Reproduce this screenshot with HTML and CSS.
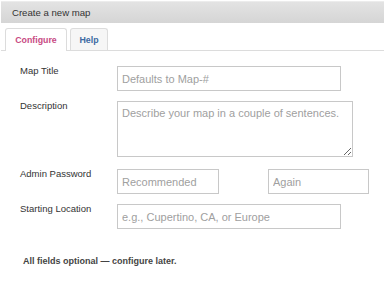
FILE: index.html
```html
<!DOCTYPE html>
<html lang="en">
<head>
    <meta charset="UTF-8">
    <meta name="viewport" content="width=device-width, initial-scale=1.0">
    <title>Create a new map</title>
    <link rel="stylesheet" href="styles.css">
</head>
<body>
    <div class="panel">
        <div class="panel-header">Create a new map</div>

        <div class="tabs">
            <div class="tab tab-config active">Configure</div>
            <div class="tab tab-help">Help</div>
        </div>

        <form class="map-form">
            <div class="row">
                <label for="mapTitle">Map Title</label>
                <input type="text" id="mapTitle" class="field wide" placeholder="Defaults to Map-#">
            </div>
            <div class="row row-desc">
                <label for="description">Description</label>
                <textarea id="description" class="field area" placeholder="Describe your map in a couple of sentences."></textarea>
            </div>
            <div class="row row-pass">
                <label for="password">Admin Password</label>
                <input type="password" id="password" class="field short" placeholder="Recommended">
                <input type="password" id="password2" class="field again" placeholder="Again">
            </div>
            <div class="row">
                <label for="location">Starting Location</label>
                <input type="text" id="location" class="field wide" placeholder="e.g., Cupertino, CA, or Europe">
            </div>
        </form>

        <p class="note">All fields optional — configure later.</p>
    </div>
</body>
</html>
```

FILE: styles.css
```css
/* page */
body {
    margin: 0;
    font-family: "Liberation Sans", Arial, sans-serif;
    background: #fff;
    color: #333;
}
.panel {
    padding: 1px 0 0 1px;
}
.panel-header {
    height: 22px;
    line-height: 22px;
    padding-left: 11px;
    font-size: 9.6px;
    color: #333;
    background: linear-gradient(#e3e3e3, #d5d5d5);
    border-top: 1px solid #ececec;
    box-sizing: border-box;
}

/* tabs */
.tabs {
    display: flex;
    gap: 3px;
    margin-top: 5px;
    padding-left: 4px;
    border-bottom: 1px solid #dcdcdc;
}
.tab {
    box-sizing: border-box;
    height: 22px;
    line-height: 22px;
    text-align: center;
    font-size: 8.8px;
    font-weight: bold;
    color: #3d6aa3;
    background: #f6f6f6;
    border: 1px solid #dcdcdc;
    border-bottom: none;
    border-radius: 3px 3px 0 0;
}
.tab-config {
    width: 62px;
}
.tab-help {
    width: 38px;
}
.tab.active {
    color: #c84a83;
    background: #fff;
    margin-bottom: -1px;
    height: 23px;
}

/* form */
.map-form {
    padding: 15px 0 0 19px;
}
.row {
    display: flex;
    align-items: flex-start;
    margin-bottom: 10px;
}
.row-desc {
    margin-bottom: 12px;
}
.row label {
    width: 97px;
    margin-top: -1px;
    font-size: 9.5px;
    color: #333;
}
.field {
    box-sizing: border-box;
    height: 25px;
    margin: 0;
    padding: 0 4px;
    font-family: "Liberation Sans", Arial, sans-serif;
    font-size: 11px;
    color: #333;
    border: 1px solid #c8c8c8;
    border-radius: 0;
    background: #fff;
}
.field::placeholder {
    color: #a0a0a0;
}
.wide {
    width: 224px;
}
.area {
    width: 236px;
    height: 56px;
    padding: 5px 4px;
    resize: both;
}
.short {
    width: 102px;
}
.again {
    width: 101px;
    margin-left: 49px;
}
.note {
    margin: 27px 0 0 22px;
    font-size: 9px;
    font-weight: bold;
    color: #444;
}
```
